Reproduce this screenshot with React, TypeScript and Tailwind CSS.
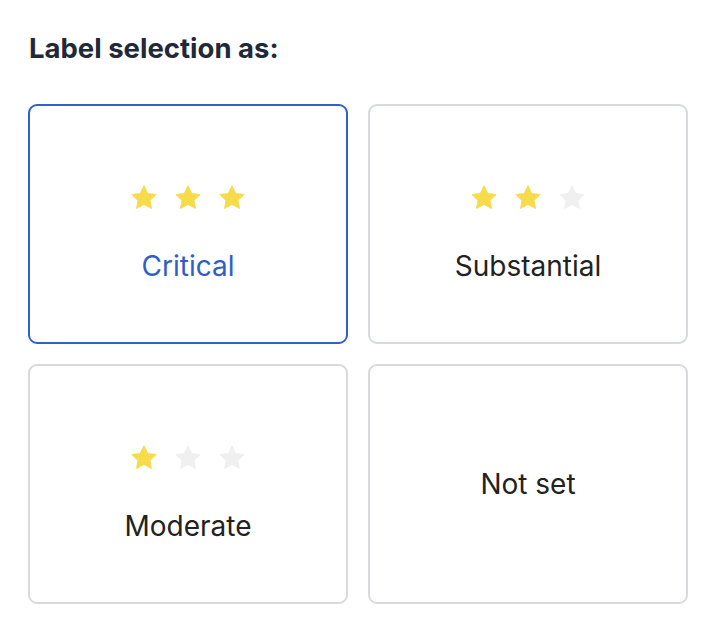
import React from "react";

const Star = ({ on }: { on: boolean }) => (
  <svg width="28" height="28" viewBox="0 0 24 24" className="block">
    <path
      d="M12 1.8l3.1 6.4 7 .9-5.1 4.8 1.3 6.9L12 17.4l-6.3 3.4 1.3-6.9-5.1-4.8 7-.9z"
      fill={on ? "#F6DC4C" : "#F0F0F0"}
      stroke={on ? "#F6DC4C" : "#F0F0F0"}
      strokeWidth="1"
      strokeLinejoin="round"
    />
  </svg>
);

const Card = ({ label, stars, selected }: { label: string; stars: number | null; selected?: boolean }) => (
  <div
    className={
      "h-[240px] rounded-[9px] border-2 flex flex-col items-center justify-center " +
      (selected ? "border-[#2F61C8]" : "border-[#D8DADD]")
    }
  >
    {stars !== null ? (
      <div className="flex flex-col items-center pt-[19px]">
        <div className="flex gap-[16px]">
          {[0, 1, 2].map((i) => (
            <Star key={i} on={i < stars} />
          ))}
        </div>
        <div
          className={
            "mt-[37px] text-[28px] leading-[34px] " + (selected ? "text-[#2F5EC6]" : "text-[#222222]")
          }
        >
          {label}
        </div>
      </div>
    ) : (
      <div className="text-[28px] leading-[34px] text-[#222222]">{label}</div>
    )}
  </div>
);

export default function App() {
  return (
    <div className="w-[718px] h-[618px] bg-white px-[28px] pt-[28px]" style={{ fontFamily: "Inter, 'Noto Sans', sans-serif" }}>
      <h1 className="text-[27.5px] leading-[40px] font-bold text-[#1F2937] pl-[1px]">Label selection as:</h1>
      <div className="mt-[36px] grid grid-cols-2 gap-x-[20px] gap-y-[20px] w-[660px]">
        <Card label="Critical" stars={3} selected />
        <Card label="Substantial" stars={2} />
        <Card label="Moderate" stars={1} />
        <Card label="Not set" stars={null} />
      </div>
    </div>
  );
}
